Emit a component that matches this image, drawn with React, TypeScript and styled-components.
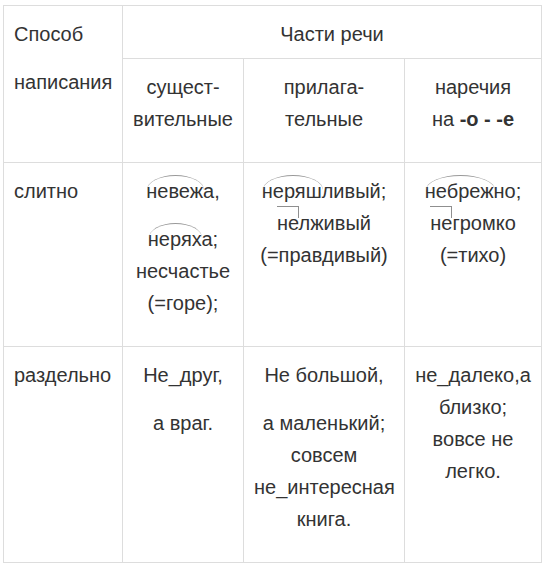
import styled, { createGlobalStyle } from 'styled-components';

const GlobalStyle = createGlobalStyle`
    body {
        margin: 0;
        background: #ffffff;
        font-family: "Liberation Sans", Arial, sans-serif;
        color: #333333;
    }
`;

export default function App() {
    return (
        <Page>
            <GlobalStyle />
            <Table>
                <colgroup>
                    <col style={{ width: 119 }} />
                    <col style={{ width: 121 }} />
                    <col style={{ width: 161 }} />
                    <col style={{ width: 137 }} />
                </colgroup>
                <tbody>
                    <tr>
                        <Cell rowSpan={2} $left>
                            <P>Способ</P>
                            <P>написания</P>
                        </Cell>
                        <HeadCell colSpan={3}>
                            <P $tight>Части речи</P>
                        </HeadCell>
                    </tr>
                    <tr>
                        <Cell>
                            <P>сущест-<br />вительные</P>
                        </Cell>
                        <Cell>
                            <P>прилага-<br />тельные</P>
                        </Cell>
                        <Cell>
                            <P>наречия<br />на <b>-о - -е</b></P>
                        </Cell>
                    </tr>
                    <tr>
                        <Cell $left>
                            <P>слитно</P>
                        </Cell>
                        <Cell>
                            <P><Root>невеж</Root>а,</P>
                            <P>
                                <Root>нерях</Root>а;<br />
                                несчастье<br />
                                (=горе);
                            </P>
                        </Cell>
                        <Cell>
                            <P>
                                <Root>неряш</Root>ливый;<br />
                                <Prefix>не</Prefix>лживый<br />
                                (=правдивый)
                            </P>
                        </Cell>
                        <Cell>
                            <P>
                                <Root>небреж</Root>но;<br />
                                <Prefix>не</Prefix>громко<br />
                                (=тихо)
                            </P>
                        </Cell>
                    </tr>
                    <tr>
                        <Cell $left>
                            <P>раздельно</P>
                        </Cell>
                        <Cell>
                            <P>Не_друг,</P>
                            <P>а враг.</P>
                        </Cell>
                        <Cell>
                            <P>Не большой,</P>
                            <P>
                                а маленький;<br />
                                совсем<br />
                                не_интересная<br />
                                книга.
                            </P>
                        </Cell>
                        <Cell>
                            <P>
                                не_далеко,а<br />
                                близко;<br />
                                вовсе не<br />
                                легко.
                            </P>
                        </Cell>
                    </tr>
                </tbody>
            </Table>
        </Page>
    );
}

const Page = styled.div`
    padding: 5px 0 0 3px;
`;

const Table = styled.table`
    border-collapse: collapse;
    table-layout: fixed;
    width: 539px;
    font-size: 20px;
    line-height: 32px;
`;

const Cell = styled.td<{ $left?: boolean }>`
    border: 1px solid #dddddd;
    vertical-align: top;
    padding: 12px 10px 11px 10px;
    text-align: ${(p) => (p.$left ? 'left' : 'center')};
    white-space: nowrap;
`;

const HeadCell = styled(Cell)`
    padding-bottom: 8px;
`;

const P = styled.p<{ $tight?: boolean }>`
    margin: 0 0 ${(p) => (p.$tight ? '0' : '16px')} 0;
`;

const Root = styled.span`
    position: relative;

    &::before {
        content: '';
        position: absolute;
        left: 1px;
        right: -1px;
        top: -5px;
        height: 14px;
        border-top: 1.5px solid #999999;
        border-radius: 50% 50% 0 0 / 100% 100% 0 0;
    }
`;

const Prefix = styled.span`
    position: relative;

    &::before {
        content: '';
        position: absolute;
        left: 0;
        right: 0;
        top: -6px;
        height: 11px;
        border-top: 1.5px solid #8f8f8f;
        border-right: 1.5px solid #8f8f8f;
    }
`;
